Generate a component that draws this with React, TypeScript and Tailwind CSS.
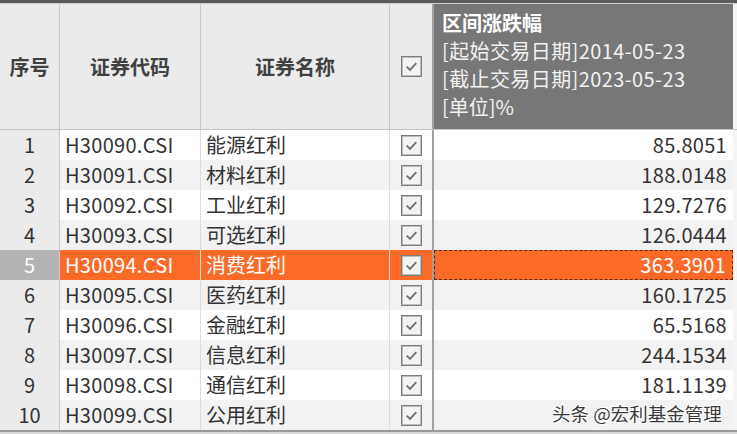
import React from "react";

const rows = [
  ["1", "H30090.CSI", "能源红利", "85.8051"],
  ["2", "H30091.CSI", "材料红利", "188.0148"],
  ["3", "H30092.CSI", "工业红利", "129.7276"],
  ["4", "H30093.CSI", "可选红利", "126.0444"],
  ["5", "H30094.CSI", "消费红利", "363.3901"],
  ["6", "H30095.CSI", "医药红利", "160.1725"],
  ["7", "H30096.CSI", "金融红利", "65.5168"],
  ["8", "H30097.CSI", "信息红利", "244.1534"],
  ["9", "H30098.CSI", "通信红利", "181.1139"],
  ["10", "H30099.CSI", "公用红利", "181.1139"],
];

function Check() {
  return (
    <div className="w-[21px] h-[21px] border border-[#7c7c7c] bg-[#f3f3f3] flex items-center justify-center shadow-[inset_0_0_0_1px_#bdbdbd]">
      <svg width="15" height="15" viewBox="0 0 14 14">
        <path d="M2.5 7.2 L5.6 10.2 L11.5 3.8" fill="none" stroke="#6f6f6f" strokeWidth="1.7" />
      </svg>
    </div>
  );
}

export default function App() {
  const font = { fontFamily: '"Noto Sans CJK SC", "Noto Sans", sans-serif' };
  return (
    <div className="w-[737px] h-[434px] bg-[#d9d9d9] overflow-hidden relative text-[#333]" style={font}>
      <div className="h-[3px] bg-[#5a5a5a]" />
      <div className="h-[1px] bg-[#cfcfcf]" />
      {/* header */}
      <div className="flex h-[126px] border-b border-[#c4c4c4]">
        <div className="w-[60px] bg-[#ebebeb] border-r border-[#c8c8c8] flex items-center justify-center text-[20px] font-bold text-[#404040]">序号</div>
        <div className="w-[141px] bg-[#ebebeb] border-r border-[#c8c8c8] flex items-center justify-center text-[20px] font-bold text-[#404040]">证券代码</div>
        <div className="w-[189px] bg-[#ebebeb] border-r border-[#c8c8c8] flex items-center justify-center text-[20px] font-bold text-[#404040]">证券名称</div>
        <div className="w-[44px] bg-[#ebebeb] border-r-2 border-[#a0a0a0] flex items-center justify-center"><Check /></div>
        <div className="w-[299px] bg-[#777777] text-[#f2f2f2] text-[20px] leading-[28px] pl-[8px] pt-[5px]">
          <div className="font-bold text-white">区间涨跌幅</div>
          <div className="tracking-[0.4px]">[起始交易日期]2014-05-23</div>
          <div className="tracking-[0.4px]">[截止交易日期]2023-05-23</div>
          <div>[单位]%</div>
        </div>
        <div className="w-[4px] bg-[#f4f4f4]" />
      </div>
      {/* body */}
      {rows.map((r, i) => {
        const sel = i === 4;
        const even = i % 2 === 1;
        const bg = sel ? "bg-[#fc6a28] text-white" : even ? "bg-[#f2f2f2]" : "bg-white";
        return (
          <div key={i} className="flex h-[30px] text-[20px] leading-[30px]">
            <div className={`w-[60px] border-r border-[#c8c8c8] text-center ${sel ? "bg-[#b3b3b3] text-white" : "bg-[#ebebeb] text-[#333]"}`}>{r[0]}</div>
            <div className={`w-[141px] border-r border-[#dcdcdc] pl-[5px] tracking-[0.3px] ${bg}`}>{r[1]}</div>
            <div className={`w-[189px] border-r border-[#dcdcdc] pl-[5px] ${bg}`}>{r[2]}</div>
            <div className={`w-[44px] border-r-2 border-[#a0a0a0] flex items-center justify-center ${bg}`}><Check /></div>
            <div className={`w-[299px] text-right pr-[6px] tracking-[0.3px] ${bg} ${sel ? "border border-dashed border-[#5a2a10] leading-[28px]" : ""}`}>{i === 9 ? "" : r[3]}</div>
            <div className="w-[4px] bg-[#f4f4f4]" />
          </div>
        );
      })}
      <div className="h-[2px] bg-[#9a9a9a]" />
      <div
        className="absolute left-[552px] top-[398px] text-[18.5px] text-[#3a3a3a] leading-[30px]"
        style={{ textShadow: "1px 1px 0 #fff, -1px -1px 0 #fff, 1px -1px 0 #fff, -1px 1px 0 #fff" }}
      >
        头条 @宏利基金管理
      </div>
    </div>
  );
}
